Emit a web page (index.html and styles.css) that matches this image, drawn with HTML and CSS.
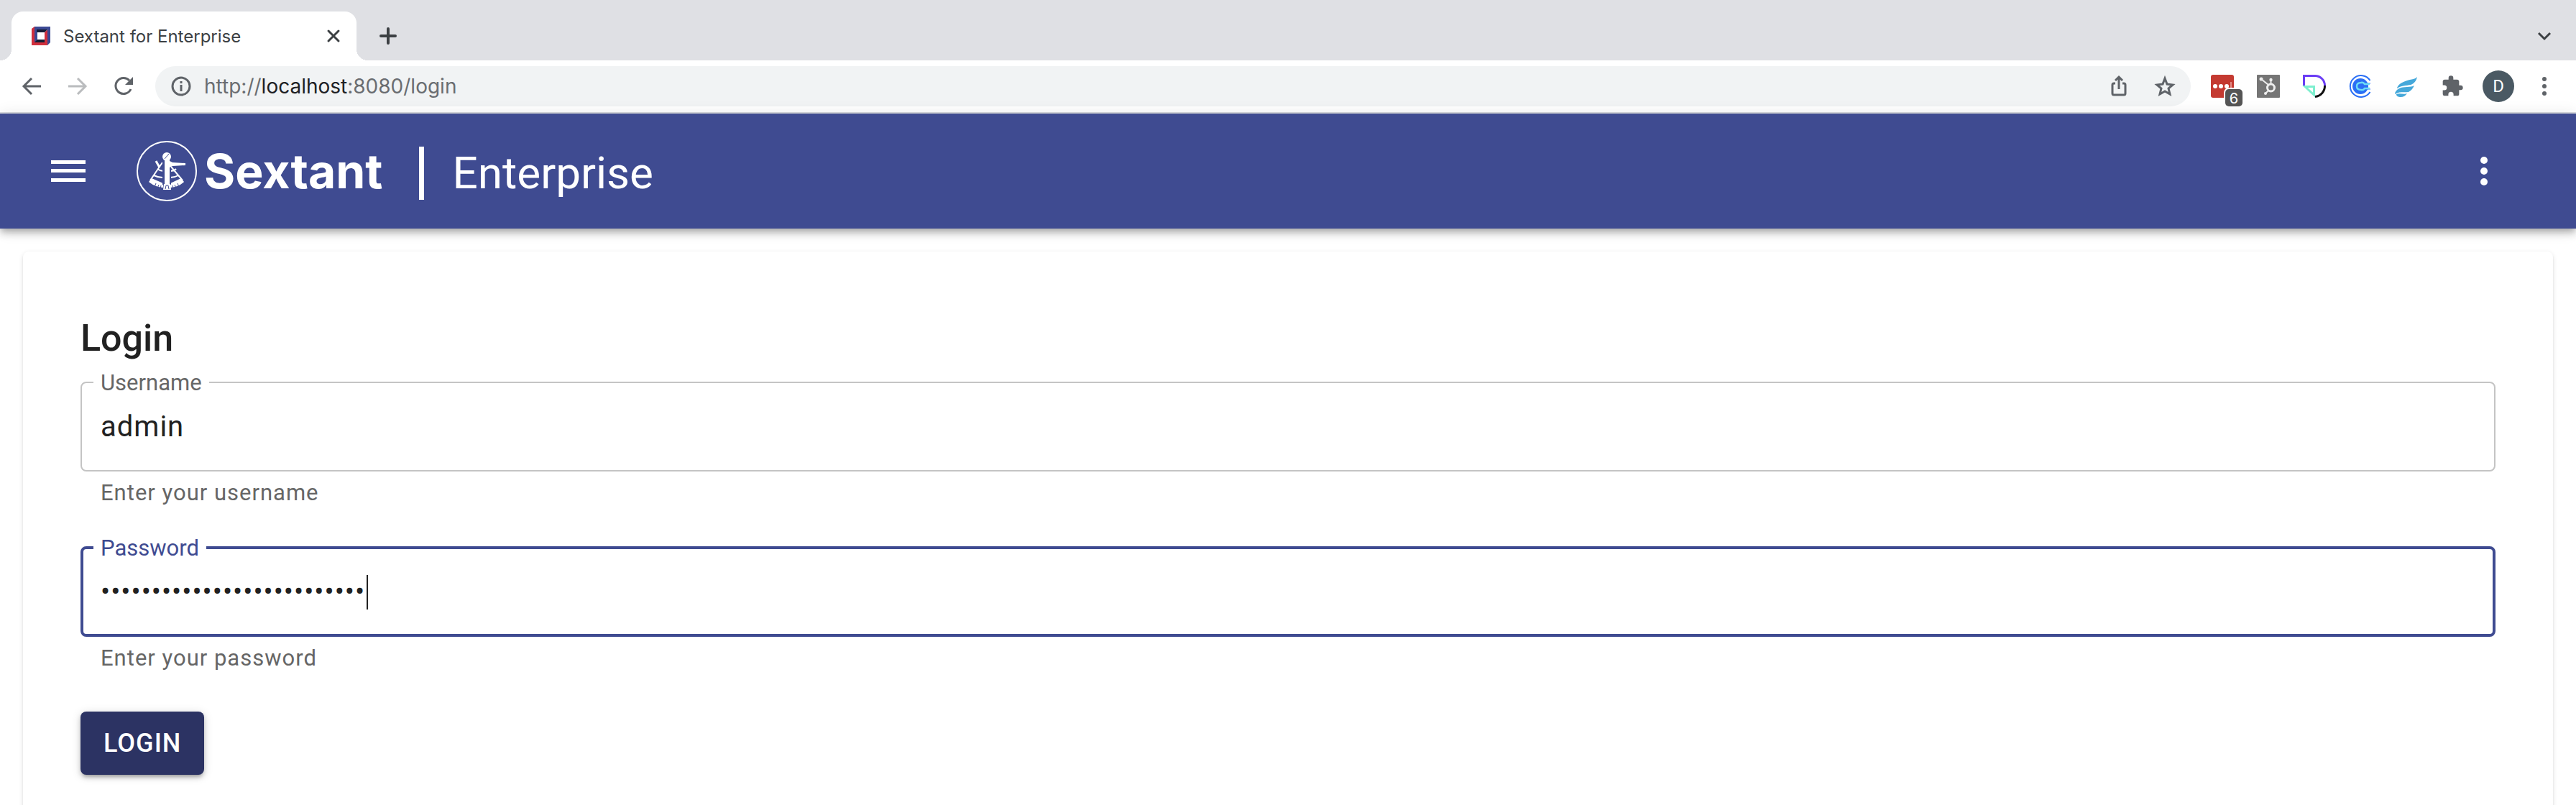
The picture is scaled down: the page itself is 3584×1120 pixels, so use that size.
FILE: index.html
```html
<!DOCTYPE html>
<html lang="en">
<head>
<meta charset="utf-8">
<meta name="viewport" content="width=device-width, initial-scale=1">
<title>Sextant for Enterprise</title>
<link rel="stylesheet" href="styles.css">
</head>
<body>
<div class="browser">
  <div class="tabstrip">
    <div class="tab">
      <svg class="favicon" viewBox="0 0 26 26" aria-hidden="true">
        <path fill="#cf2f3d" d="M0 3 4 0v26H0z"/>
        <path fill="#3b4994" d="M4 0h22v22l-4 4V4H4z"/>
        <path fill="#3b4994" d="M4 1h4v21H4z"/>
        <path fill="#cf2f3d" d="M0 22h18V8l4-4v22H0z"/>
        <path fill="#131c33" d="M7 4h15l-4 4H7zM4 22l4-4h10v4z"/><path fill="#fff" d="M8 8h10v10H8z"/>
      </svg>
      <span class="tab-title">Sextant for Enterprise</span>
      <button class="icon-btn tab-close" aria-label="Close tab"><svg viewBox="0 0 18 18"><path d="m2 2 14 14M16 2 2 16" stroke="#3c4043" stroke-width="3" stroke-linecap="round"/></svg></button>
    </div>
    <button class="icon-btn new-tab" aria-label="New tab"><svg viewBox="0 0 24 24"><path d="M12 2v20M2 12h20" stroke="#3c4043" stroke-width="4" stroke-linecap="round"/></svg></button>
    <button class="icon-btn tab-search" aria-label="Search tabs"><svg viewBox="0 0 20 20"><path d="m2 6 8 8 8-8" fill="none" stroke="#3c4043" stroke-width="3"/></svg></button>
  </div>
  <div class="toolbar">
    <div class="nav">
      <button class="icon-btn" aria-label="Back"><svg viewBox="0 0 28 28"><path d="M27 14H3M14 3 3 14l11 11" fill="none" stroke="#5f6368" stroke-width="3"/></svg></button>
      <button class="icon-btn" aria-label="Forward"><svg viewBox="0 0 28 28"><path d="M1 14h24M14 3l11 11-11 11" fill="none" stroke="#babcbe" stroke-width="3"/></svg></button>
      <button class="icon-btn" aria-label="Reload"><svg viewBox="0 0 28 28"><path d="M24 18a11 11 0 1 1-2-12" fill="none" stroke="#5f6368" stroke-width="3"/><path d="M27 1v11H16z" fill="#5f6368"/></svg></button>
    </div>
    <div class="omnibox">
      <svg class="info" viewBox="0 0 28 28" aria-hidden="true"><circle cx="14" cy="14" r="12" fill="none" stroke="#5f6368" stroke-width="3"/><path d="M14 7v3M14 12v9" stroke="#5f6368" stroke-width="3"/></svg>
      <span class="url">http://<b>localhost</b>:8080/login</span>
      <button class="icon-btn share" aria-label="Share"><svg viewBox="0 0 28 32"><path d="M9 12H7q-2 0-2 2v12q0 2 2 2h14q2 0 2-2V14q0-2-2-2h-2M14 20V3M9 8l5-5 5 5" fill="none" stroke="#5f6368" stroke-width="3"/></svg></button>
      <button class="icon-btn star" aria-label="Bookmark"><svg viewBox="0 0 30 30"><path d="m15 4 3 8 8 1-6 5 2 8-7-4-7 4 2-8-6-5 8-1z" fill="none" stroke="#5f6368" stroke-width="3"/></svg></button>
    </div>
    <div class="extensions">
      <button class="ext" aria-label="Password manager"><svg viewBox="0 0 32 32"><rect width="32" height="32" rx="3" fill="#c43a31"/><circle cx="6" cy="16" r="3" fill="#fff"/><circle cx="14" cy="16" r="3" fill="#fff"/><circle cx="22" cy="16" r="3" fill="#fff"/><path d="M28 10v12" stroke="#eda9a5" stroke-width="1.5"/></svg><span class="badge">6</span></button>
      <button class="ext" aria-label="HubSpot"><svg viewBox="0 0 32 32"><rect width="32" height="32" rx="1" fill="#757575"/><g stroke="#eee" fill="none"><circle cx="19.500" cy="18" r="5" stroke-width="3"/><path d="m6 6 10 8M19.500 13V7M16 22l-4 4" stroke-width="2"/></g><g fill="#eee"><circle cx="6" cy="6" r="2.500"/><circle cx="19.500" cy="7" r="2.200"/><circle cx="12" cy="26" r="2"/></g></svg></button>
      <button class="ext" aria-label="Dashlane"><svg viewBox="0 0 32 32"><path d="M1.500 15V1.500H17A13.500 13.500 0 0 1 30.500 15" fill="none" stroke="#6b3df5" stroke-width="3"/><path d="M30.500 15A15 15 0 0 1 17 30.500" fill="none" stroke="#111" stroke-width="3"/><path d="M3 16.500h12.500V28z" fill="none" stroke="#7eefcf" stroke-width="3"/></svg></button>
      <button class="ext" aria-label="Calendly"><svg viewBox="0 0 32 32"><path d="M29.500 8A15 15 0 1 0 29.500 24" fill="none" stroke="#2b6ff5" stroke-width="2"/><circle cx="16" cy="16" r="11" fill="#2b6ff5"/><path d="M30 12h-7q-2-3-5-3-8 0-8 7t8 7q3 0 5-3h7" fill="none" stroke="#2b6ff5" stroke-width="1"/><path d="M29 13h-7q-2-3-5-2-6 0-6 5t6 5q3 1 5-2h7" fill="none" stroke="#6cdcf5" stroke-width="2.500"/></svg></button>
      <button class="ext" aria-label="Wing"><svg viewBox="0 0 32 32"><path d="M31 3C28 7 20 6 12 10 6 12 3 17 3 19 8 15 16 15 22 14 27 12 30 8 31 3zM27 15C22 18 12 16 6 19 2 21 0 24 0 27 6 23 13 25 19 24 23 22 25 19 27 15zM17 26C13 28 7 25 2 27 2 30 5 31 8 31 12 31 15 29 17 26z" fill="#45a8da"/></svg></button>
      <button class="ext" aria-label="Extensions"><svg viewBox="0 0 24 24"><path fill="#5f6368" d="M20.500 11H19V7c0-1.100-.9-2-2-2h-4V3.500a2.500 2.500 0 0 0-5 0V5H4a2 2 0 0 0-2 2v3.800h1.500a2.700 2.700 0 0 1 0 5.400H2V20c0 1.100.9 2 2 2h3.800v-1.500a2.700 2.700 0 0 1 5.400 0V22H17a2 2 0 0 0 2-2v-4h1.500a2.500 2.500 0 0 0 0-5z"/></svg></button>
    </div>
    <button class="profile" aria-label="Profile">D</button>
    <button class="icon-btn chrome-menu" aria-label="Browser menu"><svg viewBox="0 0 28 28" fill="#5f6368"><circle cx="14" cy="4" r="3"/><circle cx="14" cy="14" r="3"/><circle cx="14" cy="24" r="3"/></svg></button>
  </div>
</div>
<header class="appbar">
  <button class="icon-btn menu" aria-label="Open menu"><svg viewBox="0 0 48 32" fill="#fff"><path d="M0 1h48v5H0zM0 13h48v5H0zM0 26h48v5H0z"/></svg></button>
  <div class="brand">
    <svg class="logo" viewBox="0 0 84 84" aria-hidden="true">
      <circle cx="42" cy="42" r="41" fill="none" stroke="#fff" stroke-width="2"/>
      <g fill="none" stroke="#fff" stroke-width="2"><path d="M36 30 19 55M48 36 64 55M29 39q4 3 8 3M24 48q6 3 12 3M47 42q5 0 8-3M47 51q6 0 11-3"/><path d="m27 28 5 9" stroke-width="3"/></g>
      <path d="m21 52 16 7v6Q25 64 17 57zM62 52l-15 7v6q12-1 19-8zM46 28l4 2 18 1v3l-18 1-4 2z" fill="#fff"/>
      <path d="m25 64 2-5M29 66l2-5M33 67l1-5M59 64l-2-5M55 66l-2-5M51 67l-1-5" stroke="#3f4b91" stroke-width="1"/>
      <path d="M37 29v32M47 37v24" stroke="#3f4b91" stroke-width="2"/>
      <circle cx="42" cy="22" r="6" fill="#fff"/><path d="M39 26h7v36h-7zM38 60h9l1 8H37z" fill="#fff"/>
      <path d="m39 25 6-7M40 67l1-5h3l1 5" stroke="#3f4b91" fill="none"/>
    </svg>
    <span class="wordmark">Sextant</span>
  </div>
  <div class="edition">
    <span class="divider"></span>
    <span class="product">Enterprise</span>
  </div>
  <button class="icon-btn more" aria-label="More options"><svg viewBox="0 0 40 40" fill="#fff"><circle cx="20" cy="5" r="5"/><circle cx="20" cy="20" r="5"/><circle cx="20" cy="35" r="5"/></svg></button>
</header>
<main class="page">
  <form class="card">
    <h1>Login</h1>
    <fieldset class="field">
      <legend><label for="username">Username</label></legend>
      <input id="username" type="text" value="admin" autocomplete="username" aria-describedby="username-help">
    </fieldset>
    <p class="help" id="username-help">Enter your username</p>
    <fieldset class="field active">
      <legend><label for="password">Password</label></legend>
      <div class="entry">
        <input id="password" type="password" value="abcdefghijklmnopqrstuvwxyz" autocomplete="current-password" aria-describedby="password-help">
        <span class="caret"></span>
      </div>
    </fieldset>
    <p class="help" id="password-help">Enter your password</p>
    <button class="submit" type="submit">LOGIN</button>
  </form>
</main>
</body>
</html>
```
FILE: styles.css
```css
* { box-sizing: border-box; }
body { display: flex; flex-direction: column; height: 100vh; margin: 0; overflow: hidden; background: #fff; color: #212121; font-family: Roboto, sans-serif; }
button { border: 0; padding: 0; background: none; font: inherit; cursor: pointer; }
svg { display: block; width: 100%; height: 100%; overflow: visible; }
.icon-btn { flex: none; width: 28px; height: 28px; }

.browser { flex: none; font-family: Inter, sans-serif; border-bottom: 2px solid #dadce0; }
.tabstrip { display: flex; align-items: center; height: 84px; padding: 16px 34px 0 16px; background: #dfe0e4; }
.tab { position: relative; display: flex; align-items: center; width: 480px; height: 68px; padding: 0 23px 0 28px; background: #fff; border-radius: 16px 16px 0 0; }
.tab::before, .tab::after { content: ""; position: absolute; bottom: 0; width: 16px; height: 16px; }
.tab::before { right: 100%; background: radial-gradient(circle at 0 0, transparent 16px, #fff 16px); }
.tab::after { left: 100%; background: radial-gradient(circle at 100% 0, transparent 16px, #fff 16px); }
.favicon { width: 26px; height: 26px; }
.tab-title { margin-left: 18px; font-size: 24px; color: #3c4043; }
.tab-close { width: 18px; height: 18px; margin-left: auto; }
.new-tab { width: 24px; height: 24px; margin-left: 32px; }
.tab-search { width: 20px; height: 20px; margin-left: auto; }

.toolbar { display: flex; align-items: center; height: 72px; padding-right: 30px; background: #fff; }
.nav { display: flex; gap: 36px; padding: 0 30px; }
.omnibox { display: flex; flex: 1; align-items: center; height: 56px; padding: 0 21px 0 22px; border-radius: 28px; background: #f1f3f4; }
.info { flex: none; width: 28px; height: 28px; }
.url { margin-left: 18px; font-size: 28px; color: #6a6d71; }
.url b { font-weight: 400; color: #202124; }
.share { height: 32px; margin-left: auto; }
.star { width: 30px; height: 30px; margin-left: 35px; }
.extensions { display: flex; gap: 32px; margin: 0 26px 0 28px; }
.ext { position: relative; width: 32px; height: 32px; }
.badge { position: absolute; left: 20px; top: 20px; width: 24px; height: 24px; border-radius: 5px; background: #555; box-shadow: 0 0 0 2px #fff; color: #fff; font-size: 20px; line-height: 26px; text-align: center; }
.profile { width: 44px; height: 44px; border-radius: 50%; background: #4a5963; color: #fff; font-family: Roboto, sans-serif; font-size: 24px; }
.chrome-menu { margin-left: 28px; }

.appbar { position: relative; z-index: 1; flex: none; display: flex; align-items: center; height: 160px; padding: 0 108px 0 71px; background: #3f4b91; color: #fff; box-shadow: 0 4px 8px -2px rgba(0,0,0,.2), 0 8px 10px rgba(0,0,0,.14), 0 2px 20px rgba(0,0,0,.12); }
.menu { width: 48px; height: 32px; }
.brand { display: flex; align-items: center; margin-left: 71px; }
.logo { width: 84px; height: 84px; }
.wordmark { margin-left: 10px; font-family: Inter, sans-serif; font-weight: 700; font-size: 66px; }
.edition { display: flex; align-items: center; gap: 40px; margin-left: 50px; padding-top: 5px; }
.divider { width: 7px; height: 74px; background: #fff; }
.product { font-size: 62px; }
.more { width: 40px; height: 40px; margin-left: auto; }

.page { flex: 1; min-height: 0; padding: 32px; }
.card { display: flex; flex-direction: column; padding: 80px; border-radius: 8px; box-shadow: 0 4px 2px -2px rgba(0,0,0,.12), 0 2px 2px rgba(0,0,0,.08), 0 2px 6px rgba(0,0,0,.12); }
h1 { margin: 9px 0 15px; font-size: 52px; line-height: 64px; font-weight: 500; }
.field { height: 138px; min-width: 0; margin: 0; padding: 0 26px; border: 2px solid #c4c4c4; border-radius: 8px; }
.field legend { height: 28px; margin-left: -10px; padding: 2px 10px 0; font-size: 31px; line-height: 26px; color: #666; }
.field.active { border: 4px solid #3f4b91; padding: 0 24px; }
.field.active legend { color: #3f4b91; }
.field input { display: block; width: 100%; height: 94px; padding: 0; border: 0; outline: 0; background: transparent; color: #212121; font-family: Roboto, sans-serif; font-size: 40px; letter-spacing: 1px; }
.field.active input { font-size: 39px; }
.entry { position: relative; }
.caret { position: absolute; left: 370px; top: 24px; width: 2px; height: 48px; background: #212121; }
.help { margin: 10px 28px 42px; font-size: 31px; line-height: 40px; letter-spacing: 1px; color: #666; }
.submit { align-self: flex-start; height: 88px; margin-top: 12px; padding: 0 32px; border-radius: 8px; background: #2c3363; color: #fff; font-size: 36px; font-weight: 500; letter-spacing: 1px; box-shadow: 0 6px 4px -4px rgba(0,0,0,.2), 0 4px 6px rgba(0,0,0,.16), 0 2px 14px rgba(0,0,0,.14); }
```
